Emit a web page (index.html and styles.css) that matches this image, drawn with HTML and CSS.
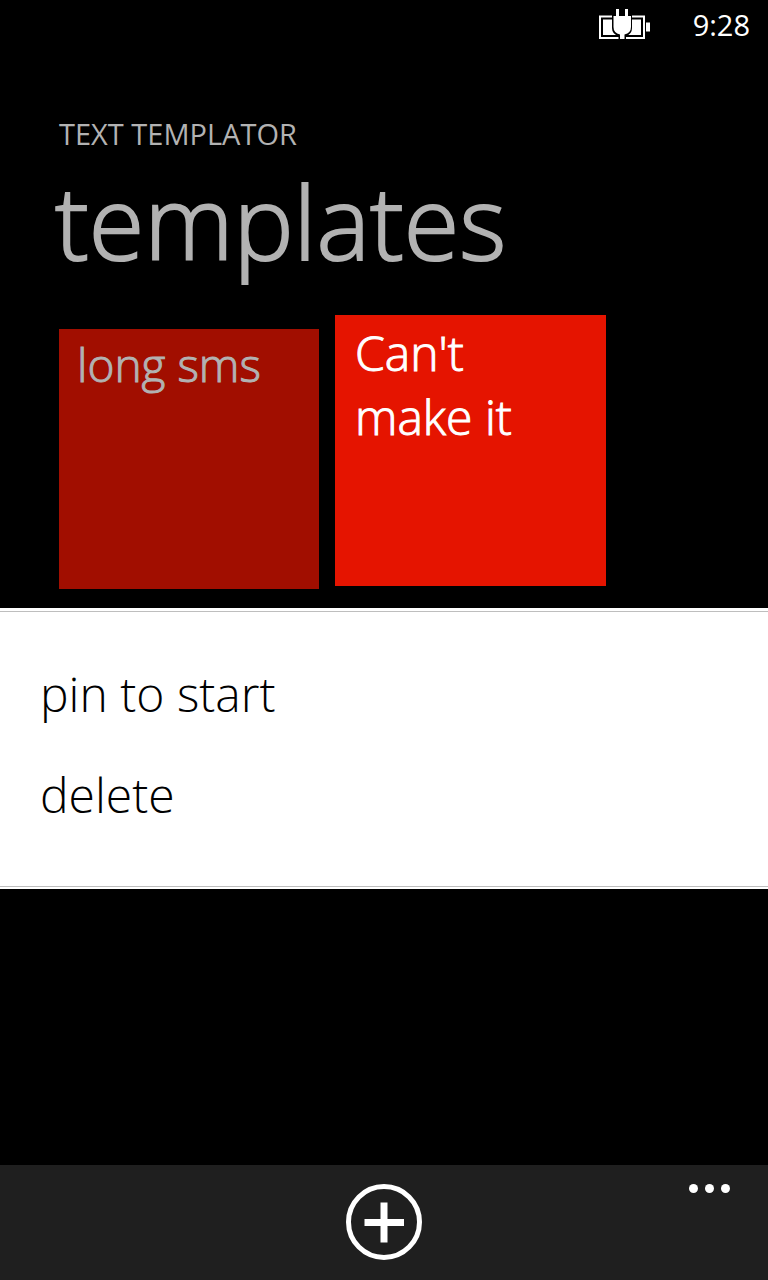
FILE: index.html
```html
<!DOCTYPE html>
<html lang="en">
<head>
<meta charset="utf-8">
<meta name="viewport" content="width=device-width, initial-scale=1">
<title>Text Templator</title>
<link rel="stylesheet" href="styles.css">
</head>
<body class="phone">
<header class="status">
  <svg class="battery" viewBox="0 0 52 32" role="img" aria-label="Battery charging">
    <path d="M1 7.500H45V29H1Z" fill="none" stroke="#fff" stroke-width="2"/>
    <path d="M4 10.500H42V26H4Z" fill="#fff"/>
    <path d="M47 13.500h4v9h-4Z" fill="#fff"/>
    <path d="M13 5H33V19Q33 25 27 27V31H19.500V27Q13 25 13 19Z" fill="#000"/>
    <path d="M17 0h3v7h6V0h3v7h3V18Q32 24 25.500 25.500V30H21V25.500Q14.500 24 14.500 18V7H17Z" fill="#fff"/>
  </svg>
  <time class="clock">9:28</time>
</header>
<main class="page">
  <p class="app-name">TEXT TEMPLATOR</p>
  <h1 class="title">templates</h1>
  <div class="tiles">
    <button class="tile" type="button">long sms</button>
    <button class="tile tile-held" type="button">Can't make it</button>
  </div>
</main>
<div class="menu" role="menu">
  <div class="menu-items">
    <button class="menu-item" type="button" role="menuitem">pin to start</button>
    <button class="menu-item" type="button" role="menuitem">delete</button>
  </div>
</div>
<footer class="app-bar">
  <button class="add" type="button" aria-label="Add">
    <svg class="add-icon" viewBox="0 0 76 76" aria-hidden="true">
      <circle cx="38" cy="38" r="35.500" fill="none" stroke="#fff" stroke-width="5"/>
      <path d="M38 18.500V58.500M18.500 38.500H58" stroke="#fff" stroke-width="7"/>
    </svg>
  </button>
  <button class="more" type="button" aria-label="More">
    <span class="dot"></span><span class="dot"></span><span class="dot"></span>
  </button>
</footer>
</body>
</html>
```
FILE: styles.css
```css
* {
  box-sizing: border-box;
}

.phone {
  display: flex;
  flex-direction: column;
  min-height: 100vh;
  margin: 0;
  background: #000;
  color: #fff;
  font-family: "Open Sans", "Noto Sans", sans-serif;
}

button {
  margin: 0;
  padding: 0;
  border: 0;
  background: none;
  color: inherit;
  font: inherit;
  text-align: left;
}

.status {
  display: flex;
  justify-content: flex-end;
  align-items: center;
  gap: 42px;
  height: 50px;
  padding-right: 18px;
}

.battery {
  width: 52px;
  height: 32px;
}

.clock {
  font-size: 29px;
  line-height: 50px;
}

.page {
  padding: 65px 58px 19px 59px;
}

.app-name {
  margin: 0;
  color: #b2b2b2;
  font-size: 29px;
  line-height: 38px;
}

.title {
  margin: 0 0 26px -4px;
  color: #b2b2b2;
  font-size: 101px;
  font-weight: 300;
  line-height: 136px;
  -webkit-text-stroke: 2px #b2b2b2;
}

.tiles {
  display: flex;
  flex-wrap: wrap;
  align-items: flex-end;
  gap: 16px;
}

.tile {
  display: flex;
  align-items: flex-start;
  width: 260px;
  height: 260px;
  padding: 3px 18px;
  background: #a10e00;
  color: #b2b2b2;
  font-size: 46px;
  font-weight: 300;
  line-height: 64px;
  -webkit-text-stroke: 1px currentColor;
}

.tile-held {
  width: 271px;
  height: 271px;
  margin-bottom: 3px;
  padding: 6px 90px 6px 20px;
  background: #e51400;
  color: #fff;
  font-size: 48px;
}

.menu {
  padding: 3px 0 2px;
  background: #fff;
  color: #000;
}

.menu-items {
  display: flex;
  flex-direction: column;
  padding: 31px 40px 41px;
  border-top: 1px solid #bebebe;
  border-bottom: 1px solid #bebebe;
}

.menu-item {
  font-size: 48px;
  font-weight: 300;
  line-height: 101px;
}

.app-bar {
  display: grid;
  grid-template-columns: 1fr auto 1fr;
  align-items: start;
  margin-top: auto;
  padding: 19px 38px 20px;
  background: #1f1f1f;
}

.add {
  grid-column: 2;
}

.add-icon {
  display: block;
  width: 76px;
  height: 76px;
}

.more {
  display: flex;
  justify-self: end;
  gap: 7px;
}

.dot {
  width: 9px;
  height: 9px;
  border-radius: 50%;
  background: #fff;
}
```
